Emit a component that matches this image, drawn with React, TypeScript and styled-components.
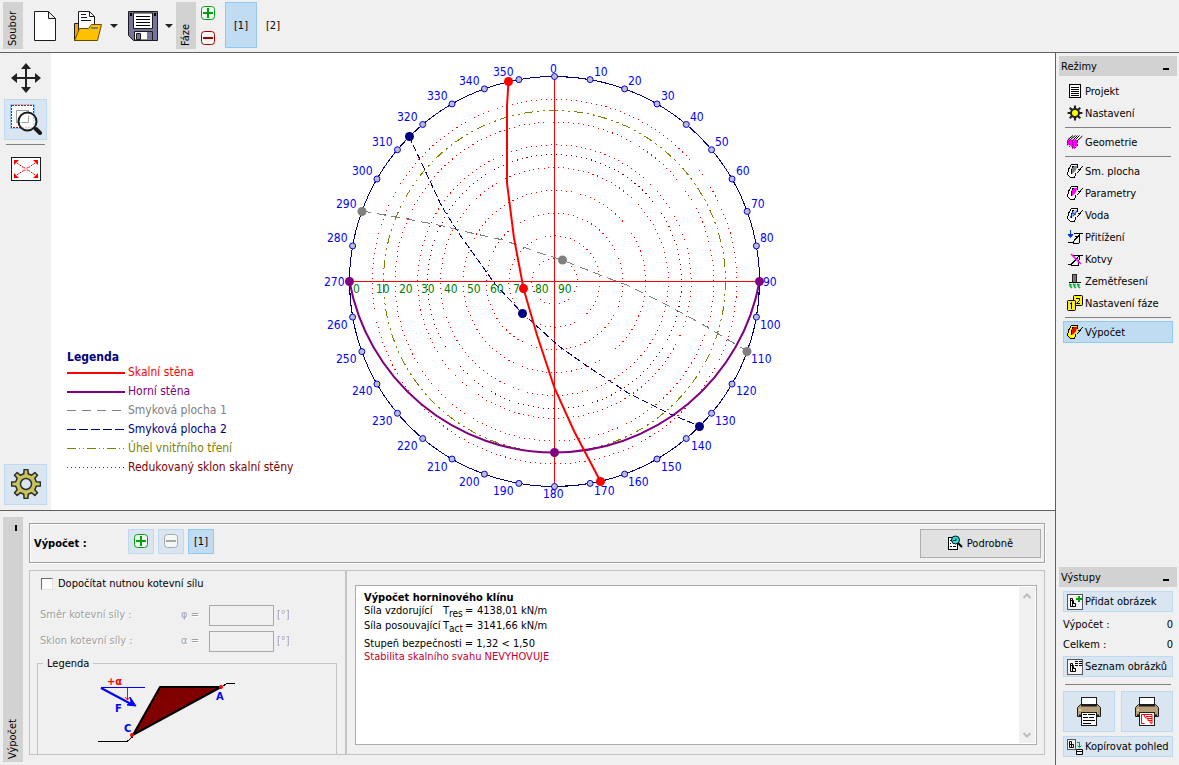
import React from "react";
import styled, { createGlobalStyle, css } from "styled-components";

const GlobalStyle = createGlobalStyle`
  *, *::before, *::after { box-sizing: border-box; }
  body {
    margin: 0;
    background: #f0f0f0;
    color: #000;
    font-family: "DejaVu Sans Condensed", "DejaVu Sans", sans-serif;
    font-size: 11px;
    line-height: 13px;
  }
  button, input, legend { font: inherit; color: inherit; }
`;

const LINE = "#606060";

/* ---------- frame of the application ---------- */

const Shell = styled.div`
  display: flex;
  flex-direction: column;
  min-height: 100vh;
  border-bottom: 1px solid #d6d6d6;
`;

const Toolbar = styled.header`
  display: flex;
  align-items: flex-start;
  height: 53px;
  padding: 2px 3px;
  border-bottom: 1px solid ${LINE};
`;

const Main = styled.div`
  display: flex;
  flex: 1;
`;

const Workspace = styled.main`
  display: flex;
  flex-direction: column;
  flex: 1;
  min-width: 0;
`;

const Stage = styled.section`
  display: flex;
  flex: 1;
  border-bottom: 1px solid ${LINE};
`;

const VerticalTab = styled.div`
  display: flex;
  align-items: center;
  justify-content: space-between;
  flex-direction: row-reverse;
  width: 20px;
  padding: 3px 0;
  background: #d2d2d2;
  writing-mode: vertical-rl;
  line-height: 20px;
  flex-shrink: 0;
  > span { transform: rotate(180deg); }
`;

const ToolbarTab = styled(VerticalTab)`
  height: 47px;
`;

const PanelTab = styled.div`
  display: flex;
  flex-direction: column;
  align-items: center;
  justify-content: space-between;
  width: 20px;
  padding: 8px 0 3px;
  background: #d2d2d2;
  line-height: 20px;
  > span { writing-mode: vertical-rl; transform: rotate(180deg); }
`;

const PanelCollapse = styled.button`
  align-self: flex-end;
  width: 2px;
  height: 6px;
  margin-right: 6px;
  padding: 0;
  border: 0;
  background: #000;
`;

/* ---------- buttons ---------- */

const PlainButton = styled.button`
  display: flex;
  align-items: center;
  justify-content: center;
  padding: 0;
  border: 0;
  background: none;
`;

const FileButton = styled(PlainButton)`
  width: 30px;
  height: 30px;
  margin-top: 9px;
`;

const CaretButton = styled(PlainButton)`
  width: 22px;
  height: 30px;
  margin-top: 9px;
`;

const FileGroup = styled.div`
  display: flex;
  padding: 0 0 0 7px;
  margin-right: -4px;
`;

const Spacer = styled.div<{ $w: number }>`
  width: ${(p) => p.$w}px;
`;

const StageStack = styled.div`
  display: flex;
  flex-direction: column;
  gap: 11px;
  padding: 4px 10px 0 5px;
`;

const selected = css`
  background: #c0dcf3;
  border: 1px solid #90c8f6;
`;

const soft = css`
  background: #d9e6f1;
  border: 1px solid #bddaf2;
`;

const StageButton = styled(PlainButton)<{ $on?: boolean }>`
  width: 32px;
  height: 46px;
  border: 1px solid transparent;
  ${(p) => p.$on && selected}
`;

const ToolStrip = styled.nav`
  display: flex;
  flex-direction: column;
  width: 51px;
  padding: 5px 4px 5px;
  align-items: flex-start;
`;

const ToolButton = styled(PlainButton)<{ $soft?: boolean }>`
  width: 43px;
  height: 41px;
  padding-bottom: 1px;
  border: 1px solid transparent;
  ${(p) => p.$soft && soft}
`;

const ToolRule = styled.hr`
  width: 39px;
  height: 1px;
  margin: 4px 2px;
  border: 0;
  background: #808080;
`;

const ToolGap = styled.div`
  flex: 1;
`;

/* ---------- stereonet ---------- */

const Canvas = styled.div`
  display: flex;
  flex: 1;
  min-width: 0;
  padding: 7px 16px 5px;
  background: #fff;
`;

const Legend = styled.div`
  align-self: flex-end;
  width: 248px;
  margin-bottom: 28px;
  font-size: 12px;
  flex-shrink: 0;
`;

const LegendTitle = styled.h2`
  margin: 0;
  font-size: 12px;
  line-height: 12px;
  color: #000080;
`;

const LegendRow = styled.div<{ $color: string }>`
  display: flex;
  align-items: center;
  gap: 3px;
  height: 19px;
  color: ${(p) => p.$color};
  white-space: nowrap;
`;

/* ---------- bottom panel ---------- */

const BottomPanel = styled.section`
  display: flex;
  gap: 6px;
  padding: 6px 10px 3px 3px;
`;

const PanelBody = styled.div`
  display: flex;
  flex-direction: column;
  flex: 1;
  gap: 7px;
  min-width: 0;
  padding: 6px 0 7px;
`;

const HeaderBar = styled.div`
  display: flex;
  align-items: center;
  gap: 4px;
  height: 40px;
  padding: 0 3px 0 4px;
  border: 1px solid #a0a0a0;
  box-shadow: 1px 1px 0 #fff, inset 1px 1px 0 #fff;
`;

const HeaderTitle = styled.strong`
  width: 90px;
`;

const MiniButton = styled(PlainButton)<{ $on?: boolean }>`
  width: 26px;
  height: 25px;
  margin-bottom: 4px;
  ${(p) => (p.$on ? selected : soft)}
`;

const DetailButton = styled.button`
  display: flex;
  align-items: center;
  justify-content: center;
  gap: 4px;
  width: 121px;
  height: 29px;
  margin-left: auto;
  padding: 0;
  border: 1px solid #adadad;
  background: #e1e1e1;
`;

const Columns = styled.div`
  display: flex;
  height: 185px;
`;

const FormPane = styled.form`
  display: flex;
  flex-direction: column;
  width: 317px;
  padding: 6px 8px 0 7px;
  border: 1px solid #c3c3c3;
`;

const CheckRow = styled.label`
  display: flex;
  align-items: center;
  gap: 5px;
  margin: 0 0 15px 4px;
`;

const CheckBox = styled.input`
  appearance: none;
  width: 12px;
  height: 12px;
  margin: 0;
  background: #fff;
  border: 1px solid #e3e3e3;
  border-top-color: #696969;
  border-left-color: #696969;
`;

const FieldRow = styled.label`
  display: grid;
  grid-template-columns: 141px 28px 65px auto;
  align-items: center;
  height: 21px;
  margin: 0 0 5px 3px;
  color: #a0a0a0;
  text-shadow: 1px 1px 0 #fff;
  > span { padding-bottom: 2px; }
  > span:last-child { padding-left: 3px; }
`;

const Field = styled.input`
  width: 65px;
  height: 21px;
  border: 1px solid #a8a8a8;
  background: #f0f0f0;
`;

const Sketch = styled.fieldset`
  flex: 1;
  min-width: 0;
  margin: 0;
  padding: 0 5px;
  border: 1px solid #c3c3c3;
  border-bottom: 0;
  > legend { padding: 0 4px; }
  > svg { display: block; }
`;

const ResultPane = styled.div`
  flex: 1;
  min-width: 0;
  padding: 14px 7px 9px 8px;
  border: 1px solid #c3c3c3;
`;

const ResultBox = styled.div`
  display: flex;
  justify-content: space-between;
  height: 100%;
  padding: 1px;
  border: 1px solid #abadb3;
  background: #fff;
`;

const ResultText = styled.div`
  padding: 4px 7px;
  p { margin: 0; }
  h3 { margin: 0; font-size: 11px; }
`;

const ResultRow = styled.div`
  display: grid;
  grid-template-columns: 79px 22px 12px auto;
  height: 15px;
  sub { font-size: 10px; line-height: 0; }
`;

const Verdict = styled.div`
  padding-top: 3px;
`;

const ResultNote = styled.p<{ $bad?: boolean }>`
  color: ${(p) => (p.$bad ? "#c8002c" : "inherit")};
`;

const ScrollBar = styled.div`
  display: flex;
  flex-direction: column;
  justify-content: space-between;
  width: 16px;
  background: #f0f0f0;
`;

const ScrollButton = styled(PlainButton)`
  width: 16px;
  height: 17px;
`;

/* ---------- right side bar ---------- */

const Side = styled.aside`
  display: flex;
  flex-direction: column;
  justify-content: space-between;
  width: 124px;
  padding: 3px 2px 8px 3px;
  border-left: 1px solid ${LINE};
  flex-shrink: 0;
`;

const SideHeader = styled.div`
  display: flex;
  align-items: center;
  justify-content: space-between;
  height: 20px;
  margin-bottom: 4px;
  padding: 0 8px 0 2px;
  background: #d2d2d2;
`;

const Collapse = styled.button`
  width: 6px;
  height: 2px;
  margin-top: 6px;
  padding: 0;
  border: 0;
  background: #000;
`;

const SideList = styled.div`
  display: flex;
  flex-direction: column;
  padding: 0 4px;
`;

const SideItem = styled.button<{ $on?: boolean }>`
  display: flex;
  align-items: center;
  gap: 2px;
  height: 22px;
  padding: 0 3px;
  border: 1px solid transparent;
  background: none;
  white-space: nowrap;
  ${(p) => p.$on && selected}
  svg { flex-shrink: 0; }
`;

const SoftItem = styled(SideItem)`
  height: 21px;
  ${soft}
`;

const SideRule = styled.hr<{ $wide?: boolean }>`
  height: 1px;
  margin: ${(p) => (p.$wide ? "7px 2px 6px" : "3px 2px")};
  border: 0;
  background: #808080;
`;

const CountRow = styled.div`
  display: flex;
  justify-content: space-between;
  height: 20px;
  line-height: 20px;
`;

const Counts = styled.div`
  padding: 3px 0 1px;
`;

const PrintRow = styled.div`
  display: flex;
  justify-content: space-between;
  margin: 0 0 4px;
`;

const PrintButton = styled(PlainButton)`
  width: 52px;
  height: 41px;
  ${soft}
`;

/* ---------- icons ---------- */

const Caret = () => (
  <svg width="8" height="4" viewBox="0 0 8 4">
    <path d="M0 0h8L4 4z" fill="#222" />
  </svg>
);

const NewIcon = () => (
  <svg width="30" height="30" viewBox="0 0 30 30">
    <path d="M4.500 .5h14l7 7v22h-21z M18.500 .5v7h7" fill="#fff" stroke="#1c1c1c" strokeLinejoin="round" />
  </svg>
);

const OpenIcon = () => (
  <svg width="30" height="30" viewBox="0 0 30 30">
    <path d="M1.500 29.500v-17h5v17z" fill="#f0a800" stroke="#1c1c1c" />
    <path d="M5.500 24V.5h11l5 5V20z" fill="#fff" stroke="#1c1c1c" />
    <path d="M16.500 .5v5h5M8 3.500h5M8 6.500h6M8 9.500h10" fill="none" stroke="#1c1c1c" />
    <path d="M1.500 29.500L6.500 17.500h9l3-4h10l-4 16z" fill="#ffc000" stroke="#6a4a00" />
    <path d="M18 17h7" stroke="#808080" strokeWidth="2" />
  </svg>
);

const SaveIcon = () => (
  <svg width="30" height="30" viewBox="0 0 30 30">
    <path d="M.5.5h29v29H5.500l-5-5z" fill="#77749a" stroke="#1c1c1c" />
    <path d="M5.500 2h19v15.500h-19z" fill="#fff" stroke="#1c1c1c" />
    <path d="M8 5.500h14M8 8.500h14M8 11.500h14M8 14.500h14" stroke="#000" />
    <path d="M6.500 29V20.500h18V29z" fill="#fff" stroke="#1c1c1c" />
    <path d="M8.500 22.500h4v6h-4z" fill="#77749a" stroke="#1c1c1c" />
    <path d="M19 21h5v8h-5z" fill="#77749a" />
    <path d="M2 2h2v3H2zM26 2h2v3h-2z" fill="#000" />
  </svg>
);

const PlusMinus = ({ color, minus }: { color: string; minus?: boolean }) => (
  <svg width="14" height="14" viewBox="0 0 14 14">
    <rect x=".5" y=".5" width="13" height="13" rx="3" fill="#f4f8f4" stroke={color} />
    <path d={minus ? "M2 7h10" : "M2 7h10M7 2v10"} stroke={color} strokeWidth="2" />
  </svg>
);

const MoveIcon = () => (
  <svg width="30" height="30" viewBox="0 0 30 30">
    <path d="M15 4v22M4 15h22" stroke="#222" strokeWidth="2" />
    <path d="M15 0l5 6H10zM15 30l5-6H10zM0 15l6-5v10zM30 15l-6-5v10z" fill="#222" />
  </svg>
);

const ZoomIcon = () => (
  <svg width="32" height="32" viewBox="0 -1 32 32">
    <rect x=".5" y=".5" width="24" height="24" fill="#fff" stroke="#90c8f6" />
    <rect
      x="1.500"
      y="1.500"
      width="22"
      height="22"
      fill="none"
      stroke="#e00000"
      strokeDasharray="2 1"
      shapeRendering="crispEdges"
    />
    <rect x="6.500" y="6.500" width="12" height="12" fill="none" stroke="#a0a0a0" />
    <circle cx="17.500" cy="17.500" r="9" fill="#fff" fillOpacity=".75" stroke="#1a1a1a" strokeWidth="2" />
    <path d="M18.500 12v6.500h-7" fill="none" stroke="#a0a0a0" />
    <path d="M24 24l3 3" stroke="#1a1a1a" strokeWidth="2" />
    <path d="M26 25l4 4" stroke="#1a1a1a" strokeWidth="4" strokeLinecap="round" />
  </svg>
);

const FitIcon = () => (
  <svg width="30" height="24" viewBox="0 0 30 24">
    <rect x=".5" y=".5" width="29" height="23" fill="#fff" stroke="#1c1c1c" />
    <path d="M6 6l7 5M24 6l-7 5M6 18l7-5M24 18l-7-5" stroke="#f00" strokeDasharray="2 1" />
    <path d="M3 3h5L3 8zM27 3h-5l5 5zM3 21h5l-5-5zM27 21h-5l5-5z" fill="#f00" />
    <path d="M12 10.500h2v3h-2M18 10.500h-2v3h2" fill="none" stroke="#f66" />
  </svg>
);

function gearPath(c: number, outer: number, inner: number, teeth: number) {
  const pts: string[] = [];
  const step = (Math.PI * 2) / teeth;
  for (let i = 0; i < teeth; i++) {
    const a = i * step - Math.PI / 2;
    [
      [-0.27, inner],
      [-0.17, outer],
      [0.17, outer],
      [0.27, inner],
    ].forEach(([k, r]) => {
      pts.push(`${(c + Math.cos(a + k * step) * r).toFixed(1)} ${(c + Math.sin(a + k * step) * r).toFixed(1)}`);
    });
  }
  return `M${pts.join("L")}Z`;
}

const GearIcon = () => (
  <svg width="30" height="30" viewBox="0 0 30 30">
    <path d={gearPath(15, 14.5, 10.5, 8)} fill="#c8c45c" stroke="#2c2c2c" strokeWidth="1.500" strokeLinejoin="round" />
    <circle cx="15" cy="15" r="5.500" fill="#d9e6f1" stroke="#2c2c2c" strokeWidth="1.500" />
  </svg>
);

const Icon16 = ({ children }: { children: React.ReactNode }) => (
  <svg width="16" height="16" viewBox="0 0 16 16">
    {children}
  </svg>
);

const ProjectIcon = () => (
  <Icon16>
    <rect x="2.500" y="1.500" width="11" height="13" fill="#fff" stroke="#000" />
    <path d="M4 4.500h8M4 6.500h8M4 8.500h8M4 10.500h8M4 12.500h8" stroke="#000" />
  </Icon16>
);

const SettingsIcon = () => (
  <Icon16>
    <path d={gearPath(8, 7.5, 5, 8)} fill="#222" />
    <circle cx="8" cy="8" r="3" fill="#ff0" />
  </Icon16>
);

const GeometryIcon = () => (
  <Icon16>
    <path d="M0 6l3-1 2 1 2-1 3 1v7l-2-1v3l-3-1-1-2-2-1-2-1z" fill="#f0f" />
    <path d="M.5 6.500v5M2.500 6v7M5.500 6.500v8M8.500 7v7M10.500 7v5" stroke="#800080" fill="none" strokeDasharray="2 1" />
    <path d="M1 5.500l5-4M3.500 5.500l5-4M6.500 5.500l4-4M10 7l5.500-5M8.500 5.500l4-4" stroke="#000" fill="none" />
  </Icon16>
);

const RockIcon = ({ face, body = "#fff", water }: { face: string; body?: string; water?: boolean }) => (
  <Icon16>
    <path d="M.5 11.500L1.500 6.500 4.500 1.500H11L10.500 6 9 10 7.500 14 4 15z" fill={body} />
    <path d="M4.500 5.500L6.500 3H10.500L8.500 8 5 11z" fill={face} />
    <path
      d="M.5 11.500L1.500 6.500 4.500 1.500H11L10.500 5.500M4.500 5.500L6.500 3M4 6l1 5M.5 11.500L4 15l3.500-1 1.500-4M11 6h2l3-3M9.500 10.500l3-3 1-2"
      fill="none"
      stroke="#000"
      shapeRendering="crispEdges"
    />
    {water && <path d="M3 11l3-6M6 9l4-5M6 6l3 2" stroke="#0040e0" />}
  </Icon16>
);

const LoadIcon = () => (
  <Icon16>
    <path d="M1 13.500h5l2-3 3-3 2-3h3M6.500 4.500h7M8 7.500h4M13 5l-1 9H6" fill="none" stroke="#000" shapeRendering="crispEdges" />
    <path d="M3.500 1v7M1 5.500l2.500 3L6 5.500z" stroke="#0030e0" fill="#0030e0" />
  </Icon16>
);

const AnchorIcon = () => (
  <Icon16>
    <path d="M1 13.500h3l3-3 3-3 2-3h4M5 4.500h7M12.500 5l-1 9H4" fill="none" stroke="#000" shapeRendering="crispEdges" />
    <path d="M4 3l10 10" stroke="#f0f" strokeWidth="1.500" />
  </Icon16>
);

const QuakeIcon = () => (
  <Icon16>
    <rect x="5.500" y="1.500" width="4" height="8" fill="#777" stroke="#222" />
    <path d="M2 9.500h12" stroke="#000" />
    <path
      d="M2 11l2 1-1 1 2 2M6 11l2 1-1 1 2 2M10 11l2 1-1 1 2 2"
      fill="none"
      stroke="#00b030"
      strokeWidth="1.500"
    />
  </Icon16>
);

const StageIcon = () => (
  <Icon16>
    <rect x="6.500" y=".5" width="9" height="10" rx="1" fill="#ffee20" stroke="#000" />
    <rect x=".5" y="5.500" width="8" height="10" rx="1" fill="#ffee20" stroke="#000" />
    <path d="M9 3.500h3.500v2L9.500 8.500H13M3 9l1.500-1.500V14" fill="none" stroke="#000" />
  </Icon16>
);

const PictureIcon = ({ list }: { list?: boolean }) => (
  <Icon16>
    <rect x=".5" y=".5" width="15" height="15" fill="#f4f4f4" stroke="#555" />
    <path d="M3.500 12.500v-8h2v8M3.500 12.500h5v-3h-3M3.500 6.500h3v3" fill="none" stroke="#000" />
    {list ? (
      <path d="M8 2.500h3M12 2.500h3M8 4.500h3M12 4.500h3M8 6.500h3M12 6.500h3" stroke="#000" />
    ) : (
      <path d="M12 2v6M9 5h6" stroke="#00a010" strokeWidth="2" />
    )}
  </Icon16>
);

const CopyIcon = () => (
  <Icon16>
    <rect x=".5" y=".5" width="8" height="10" fill="#f4f4f4" stroke="#555" />
    <path d="M2.500 8.500v-6h2v6M2.500 8.500h4v-3h-4" fill="none" stroke="#000" />
    <path d="M10 3.500h2.500V8M10.500 6.500l2 2 2-2" fill="none" stroke="#00a010" />
    <path d="M9.500 10.500h6v5h-6zM9.500 12.500h6" fill="#fff" stroke="#000" />
  </Icon16>
);

const PrinterIcon = ({ red }: { red?: boolean }) => (
  <svg width="26" height="30" viewBox="0 0 26 30">
    <rect x="5.500" y=".5" width="15" height="9" fill="#fff" stroke="#1c1c1c" />
    <path d="M1.500 10.500l3-3h17l3 3v9h-23z" fill="#b5a078" stroke="#1c1c1c" />
    <path d="M5 8.500h16" stroke="#1c1c1c" strokeWidth="2" />
    <path d="M3 18.500h20" stroke="#1c1c1c" strokeWidth="2" />
    <rect x="5.500" y="15.500" width="15" height="13" fill="#fff" stroke="#1c1c1c" />
    <path d="M3 13h2" stroke="#fff" />
    {red ? (
      <path
        d="M10.500 17.500H7.500v9h3M10 17.500h8v9l-2-1v-2h-2v-2l-3-1zM12 19.500h6M14 21.500h4M16 23.500h2"
        fill="none"
        stroke="#f00"
      />
    ) : (
      <path d="M7 17.500h4M12 17.500h7M7 20.500h5M13 20.500h5M7 23.500h12M7 26.500h8" stroke="#000" />
    )}
  </svg>
);

const DetailIcon = () => (
  <svg width="15" height="16" viewBox="0 0 15 16">
    <rect x=".5" y="2.500" width="9" height="12" fill="#fff" stroke="#000" />
    <path d="M2 5.500h1M2 8.500h1M2 11.500h2M5 11.500h3" stroke="#000" />
    <circle cx="7.500" cy="5" r="4" fill="#20e8e8" stroke="#000" />
    <path d="M5 5.500h3v-2" fill="none" stroke="#000" />
    <path d="M10 8l4 4" stroke="#000" strokeWidth="2" />
  </svg>
);

const Chevron = ({ down }: { down?: boolean }) => (
  <svg width="8" height="6" viewBox="0 0 8 6">
    <path d={down ? "M0.500 1L4 4.500 7.500 1" : "M0.500 5L4 1.500 7.500 5"} fill="none" stroke="#bcbcbc" strokeWidth="2" />
  </svg>
);

/* ---------- stereonet drawing ---------- */

const CX = 554.5;
const CY = 281.5;
const R = 205;

const AZIMUTHS: [number, number, number][] = [
  [0, 550, 73], [10, 594, 76], [20, 628, 85], [30, 661, 100], [40, 690, 121], [50, 715, 146],
  [60, 736, 175], [70, 751, 208], [80, 760, 242], [90, 763, 286], [100, 760, 329], [110, 751, 363],
  [120, 736, 395], [130, 715, 425], [140, 691, 450], [150, 661, 471], [160, 628, 486], [170, 594, 495],
  [180, 543, 498], [190, 493, 495], [200, 459, 486], [210, 427, 471], [220, 397, 450], [230, 372, 425],
  [240, 352, 395], [250, 336, 363], [260, 327, 329], [270, 324, 286], [280, 327, 242], [290, 336, 208],
  [300, 352, 175], [310, 372, 146], [320, 397, 121], [330, 427, 100], [340, 459, 85], [350, 493, 76],
];

const DIPS = [353, 376, 399, 421, 444, 467, 490, 513, 535, 558];

const Net = () => (
  <svg width="480" height="445" viewBox="315 60 480 445" role="img" aria-label="Stereonet">
    <g fill="none" shapeRendering="crispEdges">
      {[1, 2, 3, 4, 5, 6, 7, 8].map((k) => (
        <circle key={k} cx={CX} cy={CY} r={(R * k) / 9} stroke="#f00" strokeDasharray="1 4" />
      ))}
      <circle cx={CX} cy={CY} r="127" stroke="#800000" strokeDasharray="1 4" />
      <circle cx={CX} cy={CY} r="171" stroke="#808000" strokeDasharray="9 4 2 4 2 4" />
      <circle cx={CX} cy={CY} r={R} stroke="#000080" />
      <path d="M554.5 76V487M349 281.5H760" stroke="#f00" />
      <path
        d="M362 211L407 219 443 226 467 232 503 240 540 253 562 260 590 271 613 280 627 285 667 305 700 323 747 351"
        stroke="#808080"
        strokeDasharray="9 6"
      />
      <path
        d="M409 136L442 207 460 235 495 284 522 313 560 347 587 366 628 393 668 413 699 426"
        stroke="#000080"
        strokeDasharray="7 3"
      />
    </g>
    <g fontSize="12" fill="#008000">
      {DIPS.map((x, i) => (
        <text key={x} x={x} y={293}>{i * 10}</text>
      ))}
    </g>
    <g fill="none" strokeWidth="2">
      <path d="M349.500 281.500A208.400 208.400 0 0 0 759.500 281.500" stroke="#800080" />
      <path d="M508.500 81.500L507 106V183L514 238 523.500 288.500 537 335 554.500 388 574 431 600.500 481.500" stroke="#f00" />
    </g>
    {AZIMUTHS.map(([deg]) => {
      const a = (deg * Math.PI) / 180;
      return (
        <circle key={deg} cx={CX + R * Math.sin(a)} cy={CY - R * Math.cos(a)} r="3" fill="#c0c0c0" stroke="#00f" />
      );
    })}
    <g fill="#808080">
      <circle cx="362" cy="211.500" r="4.500" />
      <circle cx="562.500" cy="260" r="4.500" />
      <circle cx="747" cy="351.500" r="4.500" />
    </g>
    <g fill="#000080">
      <circle cx="409.500" cy="136.500" r="4.500" />
      <circle cx="522.500" cy="313.500" r="4.500" />
      <circle cx="699.500" cy="426.500" r="4.500" />
    </g>
    <g fill="#800080">
      <circle cx="349.500" cy="281.500" r="4.500" />
      <circle cx="759.500" cy="281.500" r="4.500" />
      <circle cx="554.500" cy="452.500" r="4.500" />
    </g>
    <g fill="#f00">
      <circle cx="508.500" cy="81.500" r="4.500" />
      <circle cx="523.500" cy="288.500" r="4.500" />
      <circle cx="600.500" cy="481.500" r="4.500" />
    </g>
    <g fontSize="12" fill="#00f">
      {AZIMUTHS.map(([deg, x, y]) => (
        <text key={deg} x={x} y={y}>{deg}</text>
      ))}
    </g>
  </svg>
);

const LEGEND = [
  { label: "Skalní stěna", color: "#ff0000", width: 2 },
  { label: "Horní stěna", color: "#800080", width: 2 },
  { label: "Smyková plocha 1", color: "#808080", width: 1, dash: "9 6" },
  { label: "Smyková plocha 2", color: "#000080", width: 1, dash: "9 3" },
  { label: "Úhel vnitřního tření", color: "#808000", width: 1, dash: "9 3 1 3 1 3" },
  { label: "Redukovaný sklon skalní stěny", color: "#800000", width: 1, dash: "1 3" },
];

const WedgeSketch = () => (
  <svg width="288" height="84" viewBox="43 669 288 84" role="img" aria-label="Legenda">
    <path d="M98 740.500h29l6-5M221 686l7-4h7" fill="none" stroke="#000" shapeRendering="crispEdges" />
    <path d="M160 686h61l-88 48z" fill="#800000" stroke="#000" strokeWidth="2" />
    <path d="M101 686.500h44" stroke="#00f" />
    <path d="M101 687l32 17" stroke="#00f" strokeWidth="2" />
    <path d="M136 705l-9-1 4-3-1-5z" fill="#00f" stroke="#00f" />
    <path d="M127.500 687v12M125 696l2.500 3 2.500-3" fill="none" stroke="#f00" />
    <circle cx="221" cy="686" r="2" fill="#f00" />
    <circle cx="132" cy="734" r="2" fill="#f00" />
    <g fontSize="11" fontWeight="bold" fill="#00f">
      <text x="107" y="684" fill="#f00">+α</text>
      <text x="115" y="711">F</text>
      <text x="124" y="731">C</text>
      <text x="216" y="699">A</text>
    </g>
  </svg>
);

/* ---------- page ---------- */

export default function App() {
  return (
    <Shell>
      <GlobalStyle />
      <Toolbar>
        <ToolbarTab><span>Soubor</span></ToolbarTab>
        <FileGroup>
          <FileButton aria-label="Nový"><NewIcon /></FileButton>
          <Spacer $w={13} />
          <FileButton aria-label="Otevřít"><OpenIcon /></FileButton>
          <CaretButton aria-label="Otevřít nabídku"><Caret /></CaretButton>
          <Spacer $w={3} />
          <FileButton aria-label="Uložit"><SaveIcon /></FileButton>
          <CaretButton aria-label="Uložit nabídku"><Caret /></CaretButton>
        </FileGroup>
        <ToolbarTab><span>Fáze</span></ToolbarTab>
        <StageStack>
          <PlainButton aria-label="Přidat fázi"><PlusMinus color="#00a010" /></PlainButton>
          <PlainButton aria-label="Odebrat fázi"><PlusMinus color="#a00000" minus /></PlainButton>
        </StageStack>
        <StageButton $on>[1]</StageButton>
        <StageButton>[2]</StageButton>
      </Toolbar>

      <Main>
        <Workspace>
          <Stage>
            <ToolStrip>
              <ToolButton aria-label="Posun"><MoveIcon /></ToolButton>
              <ToolButton $soft aria-label="Lupa"><ZoomIcon /></ToolButton>
              <ToolRule />
              <ToolButton aria-label="Zobrazit vše"><FitIcon /></ToolButton>
              <ToolGap />
              <ToolButton $soft aria-label="Nastavení kreslení"><GearIcon /></ToolButton>
            </ToolStrip>
            <Canvas>
              <Legend>
                <LegendTitle>Legenda</LegendTitle>
                {LEGEND.map((l) => (
                  <LegendRow key={l.label} $color={l.color}>
                    <svg width="58" height="2" viewBox="0 0 58 2" shapeRendering="crispEdges">
                      <path
                        d={l.width === 2 ? "M0 1H58" : "M0 .5H58"}
                        stroke={l.color}
                        strokeWidth={l.width}
                        strokeDasharray={l.dash}
                      />
                    </svg>
                    {l.label}
                  </LegendRow>
                ))}
              </Legend>
              <Net />
            </Canvas>
          </Stage>

          <BottomPanel>
            <PanelTab>
              <PanelCollapse aria-label="Sbalit panel" />
              <span>Výpočet</span>
            </PanelTab>
            <PanelBody>
              <HeaderBar>
                <HeaderTitle>Výpočet :</HeaderTitle>
                <MiniButton aria-label="Přidat výpočet"><PlusMinus color="#00a010" /></MiniButton>
                <MiniButton aria-label="Odebrat výpočet"><PlusMinus color="#a8a8a8" minus /></MiniButton>
                <MiniButton $on>[1]</MiniButton>
                <DetailButton><DetailIcon />Podrobně</DetailButton>
              </HeaderBar>
              <Columns>
                <FormPane>
                  <CheckRow>
                    <CheckBox type="checkbox" />
                    Dopočítat nutnou kotevní sílu
                  </CheckRow>
                  <FieldRow>
                    <span>Směr kotevní síly :</span>
                    <span>φ =</span>
                    <Field type="text" disabled />
                    <span>[°]</span>
                  </FieldRow>
                  <FieldRow>
                    <span>Sklon kotevní síly :</span>
                    <span>α =</span>
                    <Field type="text" disabled />
                    <span>[°]</span>
                  </FieldRow>
                  <Sketch>
                    <legend>Legenda</legend>
                    <WedgeSketch />
                  </Sketch>
                </FormPane>
                <ResultPane>
                  <ResultBox>
                    <ResultText>
                      <h3>Výpočet horninového klínu</h3>
                      <ResultRow>
                        <span>Síla vzdorující</span>
                        <span>T<sub>res</sub></span>
                        <span>=</span>
                        <span>4138,01 kN/m</span>
                      </ResultRow>
                      <ResultRow>
                        <span>Síla posouvající</span>
                        <span>T<sub>act</sub></span>
                        <span>=</span>
                        <span>3141,66 kN/m</span>
                      </ResultRow>
                      <Verdict>
                        <ResultNote>Stupeň bezpečnosti = 1,32 &lt; 1,50</ResultNote>
                        <ResultNote $bad>Stabilita skalního svahu NEVYHOVUJE</ResultNote>
                      </Verdict>
                    </ResultText>
                    <ScrollBar>
                      <ScrollButton aria-label="Nahoru"><Chevron /></ScrollButton>
                      <ScrollButton aria-label="Dolů"><Chevron down /></ScrollButton>
                    </ScrollBar>
                  </ResultBox>
                </ResultPane>
              </Columns>
            </PanelBody>
          </BottomPanel>
        </Workspace>

        <Side>
          <nav>
            <SideHeader>Režimy<Collapse aria-label="Sbalit režimy" /></SideHeader>
            <SideList>
              <SideItem><ProjectIcon />Projekt</SideItem>
              <SideItem><SettingsIcon />Nastavení</SideItem>
              <SideRule />
              <SideItem><GeometryIcon />Geometrie</SideItem>
              <SideRule />
              <SideItem><RockIcon face="#808080" />Sm. plocha</SideItem>
              <SideItem><RockIcon face="#ff00ff" />Parametry</SideItem>
              <SideItem><RockIcon face="#c8c8c8" water />Voda</SideItem>
              <SideItem><LoadIcon />Přitížení</SideItem>
              <SideItem><AnchorIcon />Kotvy</SideItem>
              <SideItem><QuakeIcon />Zemětřesení</SideItem>
              <SideItem><StageIcon />Nastavení fáze</SideItem>
              <SideRule />
              <SideItem $on><RockIcon face="#ff0000" body="#ffff00" />Výpočet</SideItem>
            </SideList>
          </nav>
          <div>
            <SideHeader>Výstupy<Collapse aria-label="Sbalit výstupy" /></SideHeader>
            <SideList>
              <SoftItem><PictureIcon />Přidat obrázek</SoftItem>
              <Counts>
                <CountRow><span>Výpočet :</span><span>0</span></CountRow>
                <CountRow><span>Celkem :</span><span>0</span></CountRow>
              </Counts>
              <SoftItem><PictureIcon list />Seznam obrázků</SoftItem>
              <SideRule $wide />
              <PrintRow>
                <PrintButton aria-label="Tisk protokolu"><PrinterIcon /></PrintButton>
                <PrintButton aria-label="Tisk pohledu"><PrinterIcon red /></PrintButton>
              </PrintRow>
              <SoftItem><CopyIcon />Kopírovat pohled</SoftItem>
            </SideList>
          </div>
        </Side>
      </Main>
    </Shell>
  );
}
